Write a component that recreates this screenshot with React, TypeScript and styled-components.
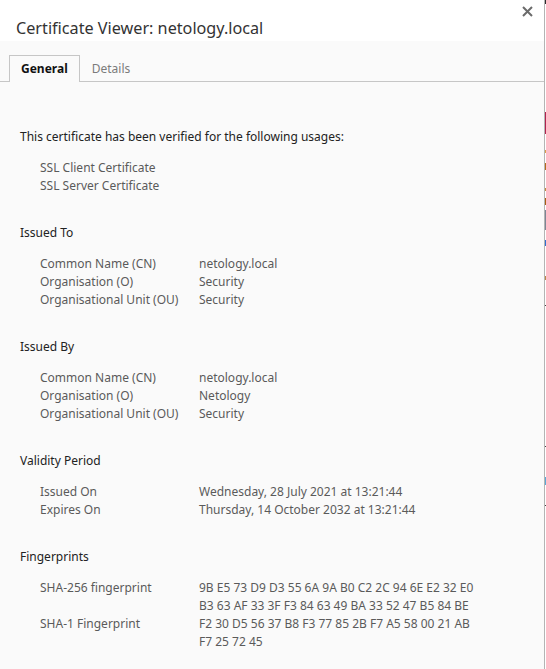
import React, {FC} from 'react';
import styled, {createGlobalStyle} from 'styled-components';

const GlobalStyle = createGlobalStyle`
  html, body {
    margin: 0;
    padding: 0;
    background: #ffffff;
  }

  body {
    font-family: "Noto Sans", "Open Sans", sans-serif;
  }
`

type TRow = {
    label: string
    value: string[]
}

type TSection = {
    title: string
    rows: TRow[]
}

const chunk = (hex: string): string[] => {
    const bytes = hex.split(' ')
    const lines: string[] = []
    for (let i = 0; i < bytes.length; i += 16) {
        lines.push(bytes.slice(i, i + 16).join(' '))
    }
    return lines
}

const sections: TSection[] = [
    {
        title: 'Issued To',
        rows: [
            {label: 'Common Name (CN)', value: ['netology.local']},
            {label: 'Organisation (O)', value: ['Security']},
            {label: 'Organisational Unit (OU)', value: ['Security']},
        ]
    },
    {
        title: 'Issued By',
        rows: [
            {label: 'Common Name (CN)', value: ['netology.local']},
            {label: 'Organisation (O)', value: ['Netology']},
            {label: 'Organisational Unit (OU)', value: ['Security']},
        ]
    },
    {
        title: 'Validity Period',
        rows: [
            {label: 'Issued On', value: ['Wednesday, 28 July 2021 at 13:21:44']},
            {label: 'Expires On', value: ['Thursday, 14 October 2032 at 13:21:44']},
        ]
    },
    {
        title: 'Fingerprints',
        rows: [
            {
                label: 'SHA-256 fingerprint',
                value: chunk('9B E5 73 D9 D3 55 6A 9A B0 C2 2C 94 6E E2 32 E0 B3 63 AF 33 3F F3 84 63 49 BA 33 52 47 B5 84 BE')
            },
            {
                label: 'SHA-1 Fingerprint',
                value: chunk('F2 30 D5 56 37 B8 F3 77 85 2B F7 A5 58 00 21 AB F7 25 72 45')
            },
        ]
    },
]

// bits of the page peeking out behind the dialog
const backdrop = [
    {h: 4, c: '#2b2b2b'}, {h: 108, c: '#ffffff'}, {h: 22, c: '#b0234f'}, {h: 16, c: '#ffffff'},
    {h: 3, c: '#d9a04a'}, {h: 10, c: '#ffffff'}, {h: 7, c: '#b36b1c'}, {h: 18, c: '#ffffff'},
    {h: 3, c: '#c08a3a'}, {h: 7, c: '#ffffff'}, {h: 7, c: '#a85e12'}, {h: 5, c: '#ffffff'},
    {h: 20, c: '#7d8594'}, {h: 10, c: '#ffffff'}, {h: 6, c: '#2f6fd0'}, {h: 30, c: '#ffffff'},
    {h: 4, c: '#b8884a'}, {h: 25, c: '#ffffff'}, {h: 1, c: '#444444'}, {h: 140, c: '#ffffff'},
    {h: 1, c: '#444444'}, {h: 30, c: '#ffffff'}, {h: 8, c: '#5aa9d6'}, {h: 20, c: '#ffffff'},
    {h: 1, c: '#444444'},
]

export default function App() {
    return (
        <Page>
            <GlobalStyle/>
            <Dialog>
                <Header>
                    <Title>Certificate Viewer: netology.local</Title>
                    <CloseButton aria-label="Close">
                        <svg width="11" height="11" viewBox="0 0 11 11">
                            <path d="M1 1 L10 10 M10 1 L1 10" stroke="#6b6b6b" strokeWidth="2"/>
                        </svg>
                    </CloseButton>
                </Header>
                <Body>
                    <Tabs>
                        <Tab $active>General</Tab>
                        <Tab>Details</Tab>
                    </Tabs>
                    <Content>
                        <Block>
                            <Heading>This certificate has been verified for the following usages:</Heading>
                            <Usages>
                                <span>SSL Client Certificate</span>
                                <span>SSL Server Certificate</span>
                            </Usages>
                        </Block>
                        {sections.map(s => <Section key={s.title} section={s}/>)}
                    </Content>
                </Body>
            </Dialog>
            <Backdrop>
                {backdrop.map((b, i) => <BackdropBit key={i} style={{height: b.h, background: b.c}}/>)}
            </Backdrop>
        </Page>
    );
}

const Section: FC<{ section: TSection }> = ({section}) => {
    return (
        <Block>
            <Heading>{section.title}</Heading>
            <Grid>
                {section.rows.map(r => (
                    <React.Fragment key={r.label}>
                        <Label>{r.label}</Label>
                        <Value>
                            {r.value.map(v => <span key={v}>{v}</span>)}
                        </Value>
                    </React.Fragment>
                ))}
            </Grid>
        </Block>
    )
}

const Page = styled.div`
  display: flex;
  width: 546px;
  height: 669px;
  overflow: hidden;
`

const Dialog = styled.div`
  width: 544px;
  height: 669px;
  border-right: 1px solid #b4b4b4;
  display: flex;
  flex-direction: column;
  background: #fafafa;
`

const Header = styled.div`
  height: 41px;
  flex-shrink: 0;
  background: #ffffff;
  position: relative;
  display: flex;
  align-items: flex-end;
  padding-left: 16px;
`

const Title = styled.h1`
  margin: 0 0 1px 0;
  font-size: 16.2px;
  font-weight: 400;
  color: #333333;
  line-height: 24px;
`

const CloseButton = styled.button`
  position: absolute;
  top: 4px;
  right: 9px;
  width: 15px;
  height: 15px;
  padding: 0;
  border: none;
  background: none;
  display: flex;
  align-items: center;
  justify-content: center;
`

const Body = styled.div`
  flex: 1;
  display: flex;
  flex-direction: column;
`

const Tabs = styled.div`
  margin-top: 14px;
  display: flex;
  padding-left: 9px;
  border-bottom: 1px solid #c6c6c6;
  height: 26px;
`

const Tab = styled.div<{ $active?: boolean }>`
  box-sizing: border-box;
  padding: 0 11px;
  font-size: 12px;
  line-height: 26px;
  font-weight: ${({$active}) => $active ? 700 : 400};
  color: ${({$active}) => $active ? '#111111' : '#7b7b7b'};
  border: 1px solid ${({$active}) => $active ? '#c6c6c6' : 'transparent'};
  border-bottom: none;
  background: #fafafa;
  margin-bottom: ${({$active}) => $active ? '-1px' : '0'};
  height: ${({$active}) => $active ? '27px' : '26px'};
`

const Content = styled.div`
  padding: 46px 20px 0 20px;
  font-size: 12px;
  line-height: 18px;
  color: #222222;
`

const Block = styled.div`
  margin-bottom: 29px;
`

const Heading = styled.div`
  margin-bottom: 13px;
`

const Usages = styled.div`
  display: flex;
  flex-direction: column;
  padding-left: 20px;
  color: #5a5a5a;
`

const Grid = styled.div`
  display: grid;
  grid-template-columns: 159px 1fr;
  padding-left: 20px;
  color: #5a5a5a;
`

const Label = styled.div``

const Value = styled.div`
  display: flex;
  flex-direction: column;
`

const Backdrop = styled.div`
  width: 1px;
  display: flex;
  flex-direction: column;
`

const BackdropBit = styled.div`
  width: 1px;
  flex-shrink: 0;
`
